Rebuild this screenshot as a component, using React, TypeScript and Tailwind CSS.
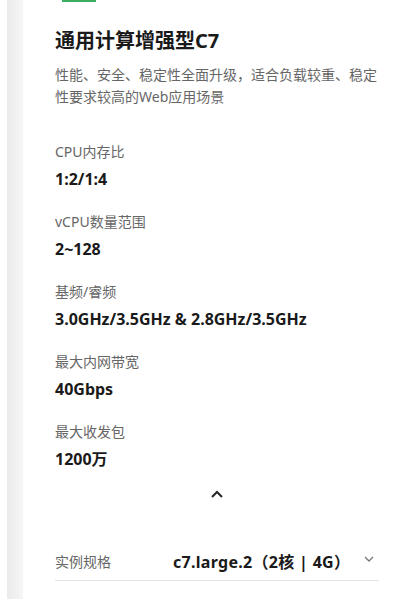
import React from 'react';

const specs = [
  { label: 'CPU内存比', value: '1:2/1:4' },
  { label: 'vCPU数量范围', value: '2~128' },
  { label: '基频/睿频', value: '3.0GHz/3.5GHz & 2.8GHz/3.5GHz' },
  { label: '最大内网带宽', value: '40Gbps' },
  { label: '最大收发包', value: '1200万' },
];

const font = { fontFamily: '"Noto Sans", "Noto Sans CJK SC", sans-serif' };

const App: React.FC = () => {
  return (
    <div className="w-[408px] h-[599px] bg-white flex overflow-hidden" style={font}>
      <div className="w-[7px] shrink-0" />
      <div className="w-[16px] shrink-0 bg-gradient-to-r from-[#ebebeb] to-[#f6f6f6]" />

      <div className="flex-1 flex flex-col pl-[32px] pr-[29px]">
        <div className="h-[2px] w-[34px] ml-[7px] bg-[#3dae5f]" />

        <h2 className="mt-[25px] text-[20px] leading-[28px] font-bold text-[#1a1a1a]">
          通用计算增强型C7
        </h2>
        <p className="mt-[9px] text-[14px] leading-[22px] text-[#666666]">
          性能、安全、稳定性全面升级，适合负载较重、稳定性要求较高的Web应用场景
        </p>

        <div className="mt-[33px] flex flex-col">
          {specs.map((s, i) => (
            <div key={i} className="flex flex-col mb-[20px]">
              <span className="text-[14px] leading-[22px] text-[#666666]">{s.label}</span>
              <span className="mt-[4px] text-[16px] leading-[24px] font-bold text-[#1a1a1a]">{s.value}</span>
            </div>
          ))}
        </div>

        <div className="flex justify-center -mt-[2px]">
          <svg width="14" height="10" viewBox="0 0 14 10" fill="none">
            <path d="M2 8 L7 3 L12 8" stroke="#252525" strokeWidth="2" />
          </svg>
        </div>

        <div className="mt-[48px] flex items-center h-[34px] border-b border-[#e3e3e3] pb-[3px]">
          <span className="text-[14px] leading-[22px] text-[#666666] w-[118px]">实例规格</span>
          <span className="flex-1 text-[16px] leading-[24px] font-bold text-[#1a1a1a] tracking-[0.3px]">
            c7.large.2（2核 | 4G）
          </span>
          <svg width="12" height="8" viewBox="0 0 12 8" fill="none" className="mr-[4px] mb-[6px]">
            <path d="M2 2 L6 6 L10 2" stroke="#777777" strokeWidth="1.3" />
          </svg>
        </div>
      </div>
    </div>
  );
};

export default App;
